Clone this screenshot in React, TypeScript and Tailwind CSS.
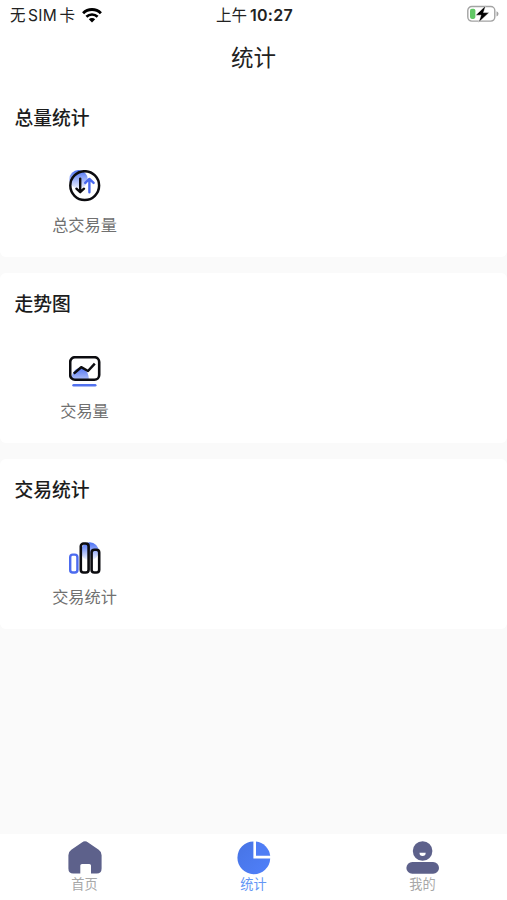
import type { ReactNode } from "react";

function TotalIcon() {
  return (
    <svg width="32" height="32" viewBox="0 0 32 32" fill="none">
      <defs>
        <linearGradient id="total" x1="0" y1="0" x2="0" y2="1">
          <stop stopColor="#4a70f5" />
          <stop offset="1" stopColor="#4a70f5" stopOpacity="0.1" />
        </linearGradient>
      </defs>
      <circle cx="9.5" cy="9.2" r="9.2" fill="url(#total)" />
      <circle cx="15.7" cy="15.6" r="14.4" stroke="#0c0c10" strokeWidth="2.5" />
      <path d="M11.2 8.6v13M7.4 18.7l3.8 3.5 3.8-3.5" stroke="#0c0c10" strokeWidth="2.4" strokeLinecap="round" strokeLinejoin="round" />
      <path d="M20.4 22.3V9.5M16.2 12.9l4.2-4 4.2 4" stroke="#4968ee" strokeWidth="2.4" strokeLinecap="round" strokeLinejoin="round" />
    </svg>
  );
}

function TrendIcon() {
  return (
    <svg width="32" height="32" viewBox="0 0 32 32" fill="none">
      <defs>
        <linearGradient id="trend" x1="0" y1="0" x2="0" y2="1">
          <stop stopColor="#5577f2" />
          <stop offset="1" stopColor="#5577f2" stopOpacity="0.5" />
        </linearGradient>
      </defs>
      <path d="M2.5 23c0-5.5 3.5-11 8.7-11 5.5 0 8.6 5.500 8.600 11z" fill="url(#trend)" />
      <rect x="1.2" y="1.2" width="29" height="22.6" rx="4.8" stroke="#0c0c10" strokeWidth="2.6" />
      <path d="M4.8 17.6l7.4-6.4 6.8 3.8 6.8-7.4" stroke="#0c0c10" strokeWidth="2.5" strokeLinejoin="round" />
      <path d="M4.6 29.3h21.6" stroke="#5272ef" strokeWidth="2.6" strokeLinecap="round" />
    </svg>
  );
}

function BarsIcon() {
  return (
    <svg width="32" height="32" viewBox="0 0 32 32" fill="none">
      <defs>
        <linearGradient id="bars" x1="0" y1="0" x2="0" y2="1">
          <stop stopColor="#4a70f5" />
          <stop offset="1" stopColor="#4a70f5" stopOpacity="0.05" />
        </linearGradient>
      </defs>
      <circle cx="20.8" cy="9.3" r="9" fill="url(#bars)" />
      <rect x="1.2" y="12.6" width="7.2" height="17.9" rx="2.6" stroke="#4c6bef" strokeWidth="2.4" />
      <rect x="11.8" y="1.5" width="7.8" height="29" rx="2.8" stroke="#0c0c10" strokeWidth="2.6" />
      <rect x="22.6" y="7.8" width="7.6" height="22.7" rx="2.8" stroke="#0c0c10" strokeWidth="2.6" />
    </svg>
  );
}

function HomeIcon() {
  return (
    <svg width="34" height="34" viewBox="0 0 34 34">
      <path d="M13.9 1.4q3.1-2.2 6.2 0l10.6 7.4q2.9 2 2.9 5.4v13.4q0 5-4.8 5H23v-8q0-1.7-1.7-1.7H14q-1.7 0-1.7 1.7v8H5.2q-4.8 0-4.8-5V14.2q0-3.400 2.900-5.400z" fill="#5d618b" />
    </svg>
  );
}

function PieIcon() {
  return (
    <svg width="34" height="34" viewBox="0 0 34 34">
      <defs>
        <linearGradient id="pie" x1="0" y1="0" x2="1" y2="1">
          <stop stopColor="#4774e4" />
          <stop offset="1" stopColor="#5080fa" />
        </linearGradient>
      </defs>
      <path d="M16.4.4v17h16.8A16.4 16.4 0 1 1 16.4.4z" fill="url(#pie)" />
      <path d="M19 .6A16 16 0 0 1 33.2 14.7H19z" fill="#4f7df5" />
    </svg>
  );
}

function UserIcon() {
  return (
    <svg width="34" height="34" viewBox="0 0 34 34">
      <circle cx="16.6" cy="10" r="9.8" fill="#5d618b" />
      <path d="M13.5 11.7h6.2a3.1 3.3 0 0 1-6.2 0z" fill="#fff" />
      <rect x="0.4" y="21" width="32.6" height="11.8" rx="5.9" fill="#5d618b" />
    </svg>
  );
}

function StatusBar() {
  return (
    <div className="grid h-[30px] grid-cols-3 items-center pl-[10px] pr-[8px] text-[15.5px] text-[#222]">
      <div className="flex items-center">
        <span className="whitespace-nowrap pt-px">
          无<span className="mx-[2.5px] tracking-[0.3px]">SIM</span>卡
        </span>
        <svg className="ml-[7px]" width="20" height="15" viewBox="0 0 20 15" fill="none">
          <path d="M1.1 5.2a12.7 12.7 0 0 1 17.8 0" stroke="#000" strokeWidth="2.9" />
          <path d="M4.4 8.8a8 8 0 0 1 11.2 0" stroke="#000" strokeWidth="2.7" />
          <path d="M6.8 11.2a4.6 4.6 0 0 1 6.4 0L10 14.6z" fill="#000" />
        </svg>
      </div>
      <div className="flex items-center justify-center whitespace-nowrap">
        <span className="pt-[2px]">上午</span>
        <span className="ml-[3px] text-[16px] font-semibold tracking-[0.3px]">10:27</span>
      </div>
      <svg className="mb-[2px] justify-self-end" width="32" height="18" viewBox="0 0 32 18" fill="none">
        <rect x="0.8" y="1.5" width="27" height="14.6" rx="4" stroke="#a3a3a3" strokeWidth="1.4" />
        <path d="M29.5 6.2q2 .5 2 2.6t-2 2.6z" fill="#a3a3a3" />
        <rect x="3" y="3.7" width="5.4" height="10.2" rx="1.8" fill="#60c865" />
        <path d="M18.8.6L8.6 10.2H14l-2.4 7.200L22.200 7.600h-5.700z" fill="#000" stroke="#fff" strokeWidth="0.5" />
      </svg>
    </div>
  );
}

function Section({ title, label, icon }: { title: string; label: string; icon: ReactNode }) {
  return (
    <section className="h-[170px] rounded-md bg-white pt-[18px] first:rounded-t-none">
      <h2 className="pl-[14.5px] text-[18.8px] font-medium leading-[28px] text-[#1c1c1c]">{title}</h2>
      <div className="mt-[37px] grid grid-cols-3">
        <button className="flex flex-col items-center">
          {icon}
          <span className="mt-[11px] text-[16.2px] leading-6 text-[#707070]">{label}</span>
        </button>
      </div>
    </section>
  );
}

const sections = [
  { title: "总量统计", label: "总交易量", icon: <TotalIcon /> },
  { title: "走势图", label: "交易量", icon: <TrendIcon /> },
  { title: "交易统计", label: "交易统计", icon: <BarsIcon /> },
];

const tabs = [
  { label: "首页", icon: <HomeIcon />, active: false },
  { label: "统计", icon: <PieIcon />, active: true },
  { label: "我的", icon: <UserIcon />, active: false },
];

export default function App() {
  return (
    <div className="flex h-screen flex-col bg-[#fafafa] font-[Inter,'Noto_Sans_CJK_SC',sans-serif]">
      <header className="h-[87px] bg-white">
        <StatusBar />
        <h1 className="mt-[10px] text-center text-[22.5px] leading-9 text-[#222]">统计</h1>
      </header>
      <main className="flex flex-1 flex-col gap-4">
        {sections.map((s) => (
          <Section key={s.title} {...s} />
        ))}
      </main>
      <nav className="grid h-[66px] grid-cols-3 bg-white pt-[7px]">
        {tabs.map((t) => (
          <button key={t.label} className="flex flex-col items-center">
            {t.icon}
            <span className={t.active ? "text-[13.2px] leading-[18px] text-[#6496f5]" : "text-[13.2px] leading-[18px] text-[#a8a8a8]"}>
              {t.label}
            </span>
          </button>
        ))}
      </nav>
    </div>
  );
}
